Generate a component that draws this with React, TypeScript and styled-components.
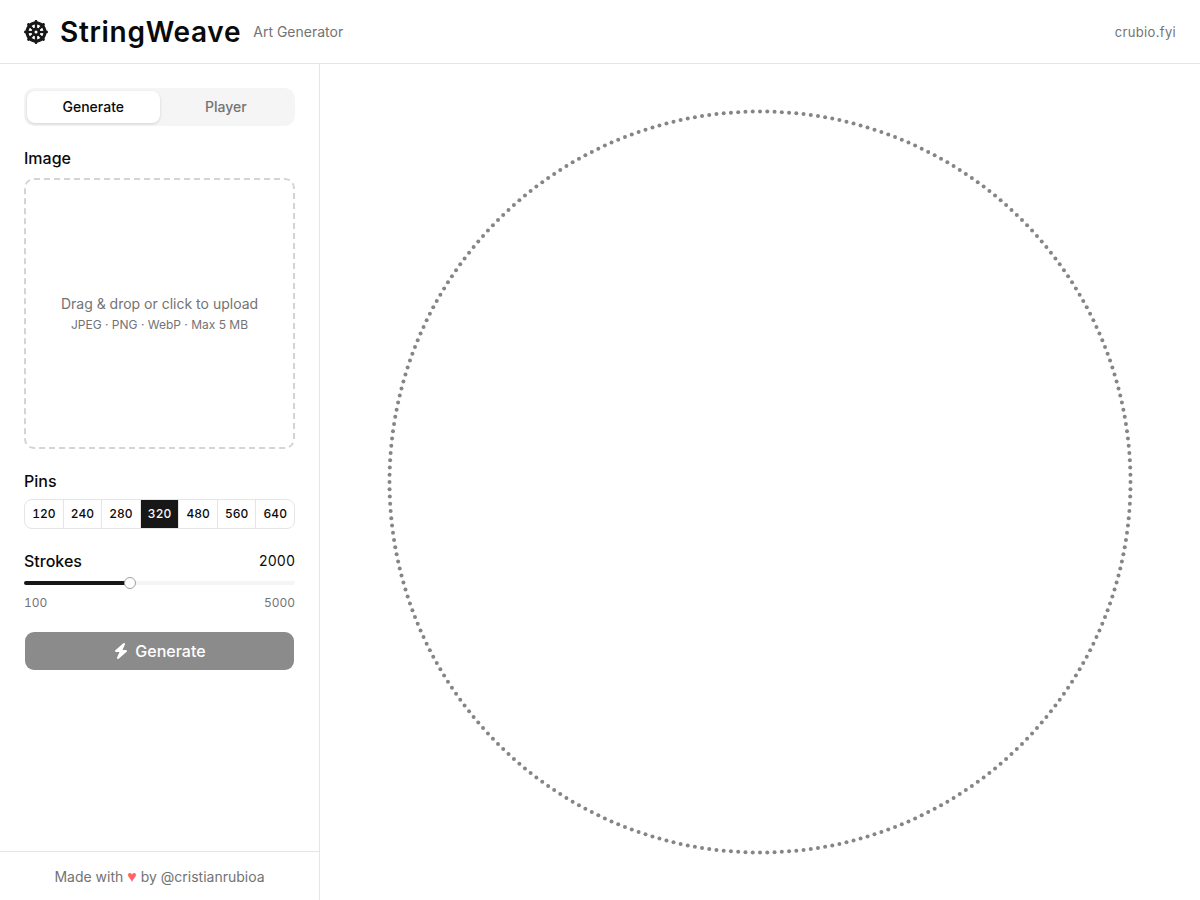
import React, { useState } from "react";
import styled, { createGlobalStyle } from "styled-components";
import { FaDharmachakra, FaBolt } from "react-icons/fa6";

const GlobalStyle = createGlobalStyle`
  *, *::before, *::after { box-sizing: border-box; }
  body {
    margin: 0;
    background: #fff;
    color: #0a0a0a;
    font-family: Inter, "Liberation Sans", sans-serif;
    font-size: 16px;
    line-height: 24px;
  }
  button, input { font: inherit; color: inherit; }
  h1, h2, p { margin: 0; }
`;

const Page = styled.div`
  display: flex;
  flex-direction: column;
  min-height: 100vh;
`;

const Header = styled.header`
  display: flex;
  align-items: center;
  justify-content: space-between;
  height: 64px;
  padding: 0 24px;
  border-bottom: 1px solid #e5e5e5;
`;

const Brand = styled.div`
  display: flex;
  align-items: center;
  gap: 12px;
  color: #171717;
`;

const Title = styled.h1`
  color: #0a0a0a;
  font-size: 28px;
  line-height: 36px;
  font-weight: 600;
  letter-spacing: 0.025em;
`;

const Tagline = styled.span`
  color: #737373;
  font-size: 14px;
  line-height: 20px;
`;

const SiteLink = styled.a`
  color: #737373;
  font-size: 13px;
  line-height: 20px;
  letter-spacing: 0.025em;
  text-decoration: none;
`;

const Body = styled.div`
  display: flex;
  flex: 1;
`;

const Sidebar = styled.aside`
  display: flex;
  flex-direction: column;
  flex: 0 0 320px;
  border-right: 1px solid #e5e5e5;
`;

const Controls = styled.div`
  display: flex;
  flex: 1;
  flex-direction: column;
  gap: 20px;
  padding: 24px;
`;

const TabList = styled.div`
  display: grid;
  grid-template-columns: 1fr 1fr;
  height: 38px;
  padding: 3px;
  border-radius: 10px;
  background: #f5f5f5;
`;

const Tab = styled.button<{ $active: boolean }>`
  border: 0;
  border-radius: 8px;
  background: ${(p) => (p.$active ? "#fff" : "transparent")};
  box-shadow: ${(p) => (p.$active ? "0 1px 3px rgba(0, 0, 0, 0.15)" : "none")};
  color: ${(p) => (p.$active ? "#0a0a0a" : "#737373")};
  font-size: 14px;
  line-height: 20px;
  font-weight: 500;
`;

const Field = styled.section<{ $tight?: boolean }>`
  display: flex;
  flex-direction: column;
  gap: ${(p) => (p.$tight ? 6 : 8)}px;
`;

const FieldLabel = styled.h2`
  font-size: 16px;
  line-height: 24px;
  font-weight: 500;
`;

const DropZone = styled.button`
  display: flex;
  flex-direction: column;
  align-items: center;
  justify-content: center;
  gap: 2px;
  aspect-ratio: 1;
  border: 2px dashed #d4d4d4;
  border-radius: 10px;
  background: transparent;
  color: #737373;
`;

const DropText = styled.span`
  font-size: 14px;
  line-height: 20px;
`;

const DropHint = styled.span`
  font-size: 12px;
  line-height: 18px;
`;

const PinGroup = styled.div`
  display: flex;
  height: 30px;
  overflow: hidden;
  border: 1px solid #e5e5e5;
  border-radius: 8px;
`;

const PinButton = styled.button<{ $active: boolean }>`
  flex: 1;
  padding: 0;
  border: 0 solid #e5e5e5;
  border-right-width: 1px;
  background: ${(p) => (p.$active ? "#171717" : "transparent")};
  color: ${(p) => (p.$active ? "#fafafa" : "#0a0a0a")};
  font-size: 12px;
  line-height: 16px;
  font-weight: 500;
  font-variant-numeric: tabular-nums;

  &:last-child { border-right-width: 0; }
`;

const LabelRow = styled.div`
  display: flex;
  justify-content: space-between;
`;

const StrokesLabel = styled.label`
  font-weight: 500;
`;

const Value = styled.output`
  font-size: 14px;
  font-variant-numeric: tabular-nums;
`;

const Slider = styled.input`
  appearance: none;
  width: 100%;
  height: 4px;
  margin: 0;
  border-radius: 2px;
  background: linear-gradient(to right, #171717 var(--fill), #f5f5f5 var(--fill));

  &::-webkit-slider-thumb {
    appearance: none;
    width: 12px;
    height: 12px;
    border: 1px solid #a1a1a1;
    border-radius: 50%;
    background: #fff;
  }
`;

const RangeRow = styled.div`
  display: flex;
  justify-content: space-between;
  padding-top: 2px;
  color: #737373;
  font-size: 12px;
  line-height: 16px;
  font-variant-numeric: tabular-nums;
`;

const GenerateButton = styled.button`
  display: flex;
  align-items: center;
  justify-content: center;
  gap: 6px;
  height: 40px;
  border: 1px solid transparent;
  border-radius: 10px;
  background: #8b8b8b;
  background-clip: padding-box;
  color: #fff;
  font-weight: 500;
`;

const Credit = styled.footer`
  padding: 15px 24px 13px;
  border-top: 1px solid #e5e5e5;
  color: #737373;
  font-size: 14px;
  line-height: 20px;
  text-align: center;
`;

const CreditLink = styled.a`
  color: inherit;
  text-decoration: none;
`;

const Heart = styled.span`
  color: #ff6467;
  font-family: "Liberation Sans", sans-serif;
  font-size: 16px;
  line-height: 16px;
`;

const Stage = styled.main`
  display: flex;
  flex: 1;
  align-items: center;
  justify-content: center;
  min-width: 0;
  padding: 24px;
`;

const Board = styled.svg`
  width: 100%;
  max-width: calc(100vh - 112px);
  aspect-ratio: 1;
`;

const PIN_OPTIONS = [120, 240, 280, 320, 480, 560, 640];
const MIN = 100;
const MAX = 5000;

export default function App() {
  const [tab, setTab] = useState("Generate");
  const [pins, setPins] = useState(320);
  const [strokes, setStrokes] = useState(2000);
  const fill = ((strokes - MIN) / (MAX - MIN)) * 100;

  return (
    <Page>
      <GlobalStyle />
      <Header>
        <Brand>
          <FaDharmachakra size={24} aria-hidden="true" />
          <Title>StringWeave</Title>
          <Tagline>Art Generator</Tagline>
        </Brand>
        <SiteLink href="#site">crubio.fyi</SiteLink>
      </Header>
      <Body>
        <Sidebar>
          <Controls>
            <TabList role="tablist">
              {["Generate", "Player"].map((name) => (
                <Tab key={name} type="button" role="tab" aria-selected={tab === name} $active={tab === name} onClick={() => setTab(name)}>
                  {name}
                </Tab>
              ))}
            </TabList>
            <Field>
              <FieldLabel>Image</FieldLabel>
              <DropZone type="button">
                <DropText>Drag &amp; drop or click to upload</DropText>
                <DropHint>JPEG · PNG · WebP · Max 5 MB</DropHint>
              </DropZone>
            </Field>
            <Field $tight>
              <FieldLabel id="pins-label">Pins</FieldLabel>
              <PinGroup role="group" aria-labelledby="pins-label">
                {PIN_OPTIONS.map((n) => (
                  <PinButton key={n} type="button" aria-pressed={pins === n} $active={pins === n} onClick={() => setPins(n)}>
                    {n}
                  </PinButton>
                ))}
              </PinGroup>
            </Field>
            <Field>
              <LabelRow>
                <StrokesLabel htmlFor="strokes">Strokes</StrokesLabel>
                <Value htmlFor="strokes">{strokes}</Value>
              </LabelRow>
              <Slider
                id="strokes"
                type="range"
                min={MIN}
                max={MAX}
                step={100}
                value={strokes}
                onChange={(e) => setStrokes(Number(e.target.value))}
                style={{ "--fill": `${fill}%` } as React.CSSProperties}
              />
              <RangeRow>
                <span>{MIN}</span>
                <span>{MAX}</span>
              </RangeRow>
            </Field>
            <GenerateButton type="button">
              <FaBolt size={16} aria-hidden="true" />
              Generate
            </GenerateButton>
          </Controls>
          <Credit>
            Made with <Heart>♥</Heart> by <CreditLink href="#author">@cristianrubioa</CreditLink>
          </Credit>
        </Sidebar>
        <Stage>
          <Board viewBox="-394 -394 788 788" role="img" aria-label={`${pins} pins`}>
            {Array.from({ length: pins }, (_, i) => {
              const a = (i / pins) * Math.PI * 2;
              return <circle key={i} cx={370.5 * Math.sin(a)} cy={-370.5 * Math.cos(a)} r={2} fill="#858585" />;
            })}
          </Board>
        </Stage>
      </Body>
    </Page>
  );
}
